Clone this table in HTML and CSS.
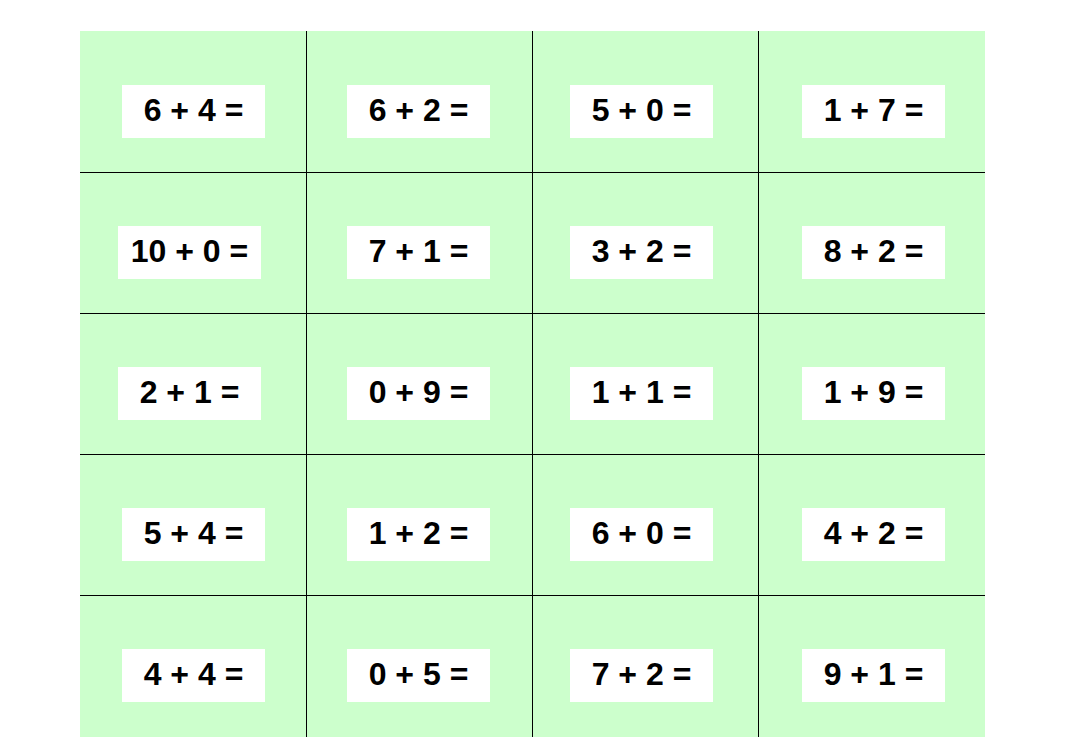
FILE: index.html
```html
<!DOCTYPE html>
<html>
<head>
<meta charset="utf-8">
<link rel="stylesheet" href="styles.css">
</head>
<body>
<div class="sheet">
  <div class="card c1"><div class="sum">6 + 4 =</div></div>
  <div class="card c2"><div class="sum">6 + 2 =</div></div>
  <div class="card c3"><div class="sum">5 + 0 =</div></div>
  <div class="card c4"><div class="sum">1 + 7 =</div></div>

  <div class="card c1 nudge"><div class="sum">10 + 0 =</div></div>
  <div class="card c2"><div class="sum">7 + 1 =</div></div>
  <div class="card c3"><div class="sum">3 + 2 =</div></div>
  <div class="card c4"><div class="sum">8 + 2 =</div></div>

  <div class="card c1 nudge"><div class="sum">2 + 1 =</div></div>
  <div class="card c2"><div class="sum">0 + 9 =</div></div>
  <div class="card c3"><div class="sum">1 + 1 =</div></div>
  <div class="card c4"><div class="sum">1 + 9 =</div></div>

  <div class="card c1"><div class="sum">5 + 4 =</div></div>
  <div class="card c2"><div class="sum">1 + 2 =</div></div>
  <div class="card c3"><div class="sum">6 + 0 =</div></div>
  <div class="card c4"><div class="sum">4 + 2 =</div></div>

  <div class="card c1"><div class="sum">4 + 4 =</div></div>
  <div class="card c2"><div class="sum">0 + 5 =</div></div>
  <div class="card c3"><div class="sum">7 + 2 =</div></div>
  <div class="card c4"><div class="sum">9 + 1 =</div></div>
</div>
</body>
</html>
```

FILE: styles.css
```css
html, body {
  margin: 0;
  padding: 0;
  background: #ffffff;
}

body {
  font-family: "Liberation Sans", Arial, sans-serif;
}

.sheet {
  margin: 31px 0 0 80px;
  width: 905px;
  display: grid;
  grid-template-columns: 226px 225px 225px 226px;
  grid-template-rows: 141px 140px 140px 140px 141px;
  gap: 1px;
  background: #000000;
}

.card {
  background: #ccffcc;
  display: flex;
  align-items: flex-start;
  padding-top: 54px;
  box-sizing: border-box;
}

.sheet .card:nth-child(n+5) {
  padding-top: 53px;
}

.c1 { padding-left: 42px; }
.c1.nudge { padding-left: 38px; }
.c2 { padding-left: 40px; }
.c3 { padding-left: 37px; }
.c4 { padding-left: 43px; }

.sum {
  width: 143px;
  height: 53px;
  background: #ffffff;
  color: #000000;
  font-weight: bold;
  font-size: 32px;
  line-height: 50px;
  text-align: center;
  white-space: pre;
}
```
